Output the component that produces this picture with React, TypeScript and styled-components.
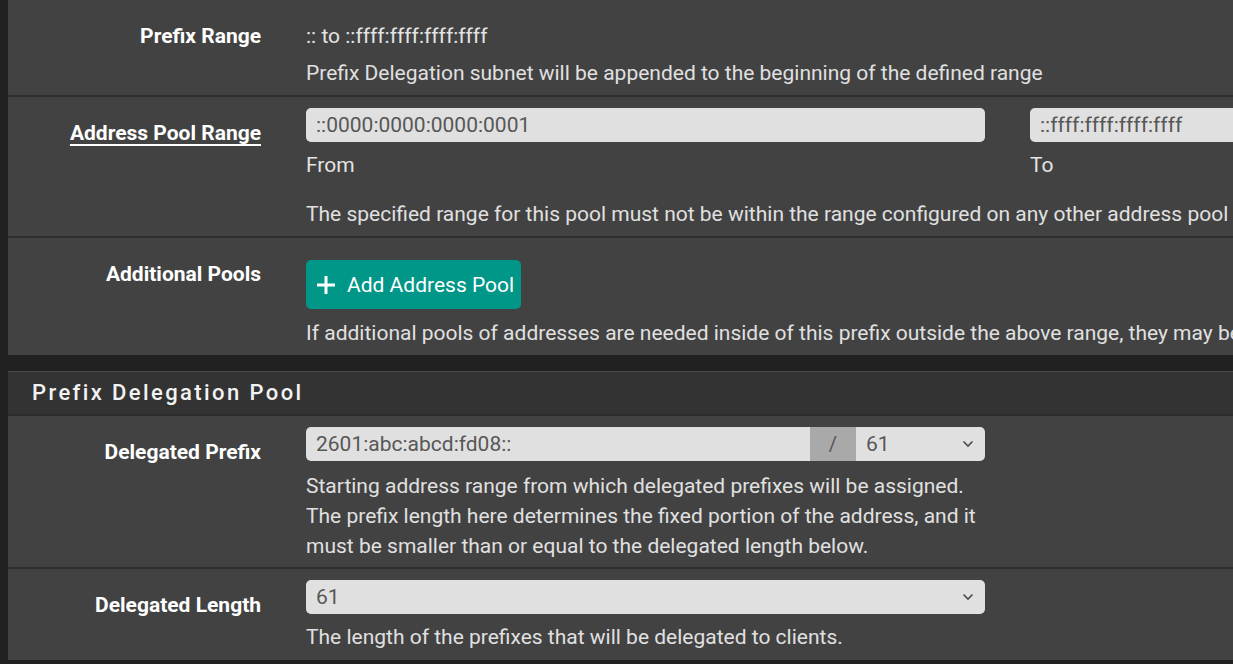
import React from "react";
import styled, { createGlobalStyle } from "styled-components";

const GlobalStyle = createGlobalStyle`
  html, body {
    margin: 0;
    padding: 0;
    background: #212121;
    overflow: hidden;
  }
  body {
    font-family: Roboto, "Liberation Sans", sans-serif;
    font-size: 21px;
    line-height: 30px;
  }
`;

const Page = styled.div`
  width: 1900px;
  padding-left: 8px;
  display: flex;
  flex-direction: column;
  gap: 16px;
`;

const Panel = styled.section`
  background: #424242;
`;

const PanelHeading = styled.h2`
  margin: 0;
  height: 45px;
  box-sizing: border-box;
  padding-left: 24px;
  display: flex;
  align-items: center;
  background: #333333;
  border-top: 1px solid #484848;
  border-bottom: 2px solid #2c2c2c;
  color: #f2f2f2;
  font-size: 22px;
  font-weight: 500;
  letter-spacing: 2.4px;
`;

const Row = styled.div<{ $pb?: number }>`
  display: grid;
  grid-template-columns: 253px 1fr;
  column-gap: 45px;
  padding: 11px 0 ${(p) => p.$pb ?? 7}px;
  & + & {
    border-top: 2px solid #2f2f2f;
  }
`;

const Label = styled.div<{ $link?: boolean }>`
  padding-top: 10px;
  text-align: right;
  color: #ffffff;
  font-weight: 700;
  white-space: nowrap;
  text-decoration: ${(p) => (p.$link ? "underline" : "none")};
  text-decoration-thickness: 2px;
  text-underline-offset: 4px;
`;

const Content = styled.div<{ $width?: number }>`
  display: flex;
  flex-direction: column;
  align-items: flex-start;
  ${(p) => (p.$width ? `width: ${p.$width}px;` : "")}
`;

const StaticText = styled.div`
  padding-top: 10px;
  color: #e4e4e4;
  white-space: nowrap;
`;

const Help = styled.div<{ $mt: number; $wrap?: boolean }>`
  margin-top: ${(p) => p.$mt}px;
  color: #e0e0e0;
  white-space: ${(p) => (p.$wrap ? "normal" : "nowrap")};
`;

const Pair = styled.div`
  display: grid;
  grid-template-columns: 679px 679px;
  column-gap: 45px;
`;

const Field = styled.div`
  display: flex;
  flex-direction: column;
`;

const Caption = styled.div`
  margin-top: 8px;
  color: #e4e4e4;
`;

const TextBox = styled.div<{ $grow?: boolean }>`
  height: 34px;
  box-sizing: border-box;
  padding: 0 10px;
  display: flex;
  align-items: center;
  background: #e0e0e0;
  color: #575757;
  border-radius: 5px;
  font-size: 21px;
  white-space: nowrap;
  ${(p) => (p.$grow ? "flex: 1;" : "")}
`;

const InputGroup = styled.div`
  display: flex;
  width: 679px;
  height: 34px;
  border-radius: 5px;
  overflow: hidden;
  & > ${TextBox} {
    border-radius: 0;
  }
`;

const Addon = styled.div`
  width: 46px;
  display: flex;
  align-items: center;
  justify-content: center;
  background: #a9a9a9;
  color: #555;
  font-size: 20px;
`;

const SelectBox = styled(TextBox)<{ $w: number }>`
  width: ${(p) => p.$w}px;
  justify-content: space-between;
  padding-right: 11px;
`;

const Button = styled.button`
  margin-top: 11px;
  height: 49px;
  padding: 0 7px 0 10px;
  display: flex;
  align-items: center;
  gap: 11px;
  border: none;
  border-radius: 5px;
  background: #009688;
  color: #ffffff;
  font-family: inherit;
  font-size: 21px;
  cursor: pointer;
`;

const Chevron = () => (
  <svg width="12" height="8" viewBox="0 0 12 8">
    <path d="M1.5 1.5 L6 6 L10.5 1.5" fill="none" stroke="#4a4a4a" strokeWidth="1.6" />
  </svg>
);

const PlusIcon = () => (
  <svg width="20" height="20" viewBox="0 0 20 20">
    <path d="M10 1 V19 M1 10 H19" stroke="#fff" strokeWidth="3" />
  </svg>
);

export default function App() {
  return (
    <>
      <GlobalStyle />
      <Page>
        <Panel>
          <Row>
            <Label>Prefix Range</Label>
            <Content>
              <StaticText>:: to ::ffff:ffff:ffff:ffff</StaticText>
              <Help $mt={7}>Prefix Delegation subnet will be appended to the beginning of the defined range</Help>
            </Content>
          </Row>
          <Row>
            <Label $link>Address Pool Range</Label>
            <Content>
              <Pair>
                <Field>
                  <TextBox>::0000:0000:0000:0001</TextBox>
                  <Caption>From</Caption>
                </Field>
                <Field>
                  <TextBox>::ffff:ffff:ffff:ffff</TextBox>
                  <Caption>To</Caption>
                </Field>
              </Pair>
              <Help $mt={19}>
                The specified range for this pool must not be within the range configured on any other address pool for this interface.
              </Help>
            </Content>
          </Row>
          <Row>
            <Label>Additional Pools</Label>
            <Content>
              <Button>
                <PlusIcon />
                Add Address Pool
              </Button>
              <Help $mt={9}>
                If additional pools of addresses are needed inside of this prefix outside the above range, they may be specified here.
              </Help>
            </Content>
          </Row>
        </Panel>

        <Panel>
          <PanelHeading>Prefix Delegation Pool</PanelHeading>
          <Row $pb={6}>
            <Label>Delegated Prefix</Label>
            <Content $width={679}>
              <InputGroup>
                <TextBox $grow>2601:abc:abcd:fd08::</TextBox>
                <Addon>/</Addon>
                <SelectBox $w={129}>
                  61
                  <Chevron />
                </SelectBox>
              </InputGroup>
              <Help $mt={10} $wrap>
                Starting address range from which delegated prefixes will be assigned. The prefix length here determines the fixed portion of the address, and it must be smaller than or equal to the delegated length below.
              </Help>
            </Content>
          </Row>
          <Row $pb={8}>
            <Label>Delegated Length</Label>
            <Content $width={679}>
              <SelectBox $w={679}>
                61
                <Chevron />
              </SelectBox>
              <Help $mt={8}>The length of the prefixes that will be delegated to clients.</Help>
            </Content>
          </Row>
        </Panel>
      </Page>
    </>
  );
}
